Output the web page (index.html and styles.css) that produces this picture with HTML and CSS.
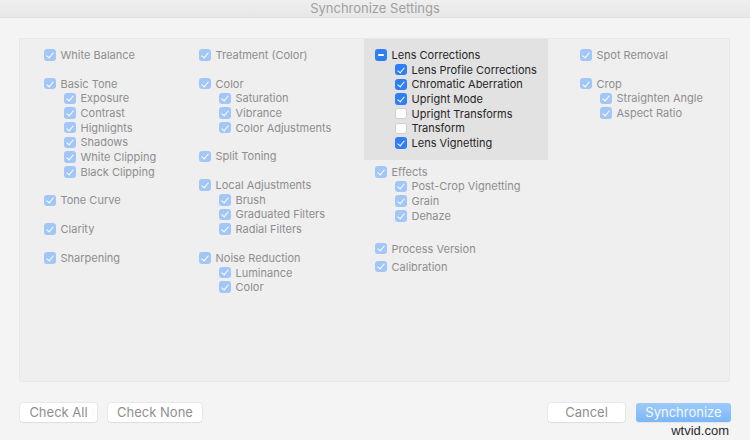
FILE: index.html
```html
<!DOCTYPE html>
<html>
<head>
<meta charset="utf-8">
<link rel="stylesheet" href="styles.css">
</head>
<body>
<div class="titlebar">Synchronize Settings</div>
<div class="panel">
  <div class="col col1">
    <div class="item"><span class="cb dis"></span>White Balance</div>
    <div class="item gs"><span class="cb dis"></span>Basic Tone</div>
    <div class="item sub"><span class="cb dis"></span>Exposure</div>
    <div class="item sub"><span class="cb dis"></span>Contrast</div>
    <div class="item sub"><span class="cb dis"></span>Highlights</div>
    <div class="item sub"><span class="cb dis"></span>Shadows</div>
    <div class="item sub"><span class="cb dis"></span>White Clipping</div>
    <div class="item sub"><span class="cb dis"></span>Black Clipping</div>
    <div class="item gs"><span class="cb dis"></span>Tone Curve</div>
    <div class="item gs"><span class="cb dis"></span>Clarity</div>
    <div class="item gs"><span class="cb dis"></span>Sharpening</div>
  </div>
  <div class="col col2">
    <div class="item"><span class="cb dis"></span>Treatment (Color)</div>
    <div class="item gs"><span class="cb dis"></span>Color</div>
    <div class="item sub"><span class="cb dis"></span>Saturation</div>
    <div class="item sub"><span class="cb dis"></span>Vibrance</div>
    <div class="item sub"><span class="cb dis"></span>Color Adjustments</div>
    <div class="item gs"><span class="cb dis"></span>Split Toning</div>
    <div class="item gs"><span class="cb dis"></span>Local Adjustments</div>
    <div class="item sub"><span class="cb dis"></span>Brush</div>
    <div class="item sub"><span class="cb dis"></span>Graduated Filters</div>
    <div class="item sub"><span class="cb dis"></span>Radial Filters</div>
    <div class="item gs"><span class="cb dis"></span>Noise Reduction</div>
    <div class="item sub"><span class="cb dis"></span>Luminance</div>
    <div class="item sub"><span class="cb dis"></span>Color</div>
  </div>
  <div class="col col3">
    <div class="lensbox">
      <div class="item on"><span class="cb mixed"></span>Lens Corrections</div>
      <div class="item sub on"><span class="cb chk"></span>Lens Profile Corrections</div>
      <div class="item sub on"><span class="cb chk"></span>Chromatic Aberration</div>
      <div class="item sub on"><span class="cb chk"></span>Upright Mode</div>
      <div class="item sub on"><span class="cb off"></span>Upright Transforms</div>
      <div class="item sub on"><span class="cb off"></span>Transform</div>
      <div class="item sub on"><span class="cb chk"></span>Lens Vignetting</div>
    </div>
    <div class="item after-box"><span class="cb dis"></span>Effects</div>
    <div class="item sub"><span class="cb dis"></span>Post-Crop Vignetting</div>
    <div class="item sub"><span class="cb dis"></span>Grain</div>
    <div class="item sub"><span class="cb dis"></span>Dehaze</div>
    <div class="item process"><span class="cb dis"></span>Process Version</div>
    <div class="item calib"><span class="cb dis"></span>Calibration</div>
  </div>
  <div class="col col4">
    <div class="item"><span class="cb dis"></span>Spot Removal</div>
    <div class="item gs"><span class="cb dis"></span>Crop</div>
    <div class="item sub"><span class="cb dis"></span>Straighten Angle</div>
    <div class="item sub"><span class="cb dis"></span>Aspect Ratio</div>
  </div>
</div>
<div class="footer">
  <div class="btngroup">
    <button class="btn w77">Check All</button>
    <button class="btn w94">Check None</button>
  </div>
  <div class="btngroup">
    <button class="btn w77">Cancel</button>
    <button class="btn primary w95">Synchronize</button>
  </div>
</div>
<div class="watermark">wtvid.com</div>
</body>
</html>
```

FILE: styles.css
```css
* { box-sizing: border-box; }
html, body {
  margin: 0;
  padding: 0;
}
body {
  width: 750px;
  height: 440px;
  background: #f4f4f4;
  font-family: Inter, "Liberation Sans", Arial, sans-serif;
  position: relative;
  overflow: hidden;
}
.titlebar {
  height: 18px;
  background: linear-gradient(#efefef, #e7e7e7);
  border-bottom: 1px solid #dedede;
  color: #a0a0a0;
  font-size: 13px;
  line-height: 17px;
  text-align: center;
}
.panel {
  margin: 20px 0 0 19px;
  width: 711px;
  height: 344px;
  background: #efefef;
  border: 1px solid #e8e8e8;
  border-radius: 2px;
  display: flex;
  padding-left: 24px;
}
.col {
  display: flex;
  flex-direction: column;
  padding-top: 8.65px;
}
.col1 { width: 155px; }
.col2 { width: 165px; }
.col3 { width: 216px; padding-top: 0; }
.col4 { flex: 1; }
.lensbox {
  width: 184px;
  background: #e2e2e2;
  padding: 8.65px 0 9.45px 11px;
  margin-left: -0px;
}
.col3 > .item { padding-left: 11px; }
.col3 > .item.sub { padding-left: 31px; }
.item {
  height: 14.7px;
  display: flex;
  align-items: center;
  font-size: 11px;
  color: #8e8e8e;
  white-space: nowrap;
}
.item.on { color: #262626; }
.item.sub { padding-left: 20px; }
.item.gs { margin-top: 14px; }
.item.after-box { margin-top: 4.55px; }
.item.process { margin-top: 18px; }
.item.calib { margin-top: 3.3px; }
.cb {
  position: relative;
  width: 11.5px;
  height: 11.5px;
  border-radius: 3px;
  margin-right: 5px;
  flex: none;
}
.cb.dis { background: #a2c7f6; }
.cb.chk { background: #2f7ef6; }
.cb.mixed { background: #2f7ef6; }
.cb.off { background: #fff; border: 1px solid #d0d0d0; }
.cb.dis::after, .cb.chk::after {
  content: "";
  position: absolute;
  left: 4px;
  top: 1.6px;
  width: 3px;
  height: 6px;
  border-right: 1.7px solid #fff;
  border-bottom: 1.7px solid #fff;
  transform: rotate(40deg);
}
.cb.mixed::after {
  content: "";
  position: absolute;
  left: 2.5px;
  right: 2.5px;
  top: 5px;
  height: 1.8px;
  background: #fff;
  border-radius: 1px;
}
.footer {
  display: flex;
  justify-content: space-between;
  padding: 0 19px 0 20px;
  margin-top: 21px;
}
.btngroup { display: flex; gap: 11px; }
.btn {
  height: 19px;
  border: none;
  border-radius: 3px;
  background: #fff;
  box-shadow: 0 0 0 0.5px #dcdcdc, 0 1px 1px rgba(0,0,0,0.08);
  color: #8f8f8f;
  font-family: Inter, "Liberation Sans", Arial, sans-serif;
  font-size: 13px;
  padding: 0;
  line-height: 19px;
}
.btn.primary {
  background: linear-gradient(#9ccbfa, #7cb6f7);
  color: #f4f9ff;
  box-shadow: 0 1px 1px rgba(0,0,0,0.06);
}
.w77 { width: 77px; }
.w94 { width: 94px; }
.w95 { width: 95px; }
.watermark {
  position: absolute;
  right: 21px;
  bottom: 2px;
  font-family: "Liberation Sans", Arial, sans-serif;
  font-size: 13px;
  color: #2a2a2a;
}
```
